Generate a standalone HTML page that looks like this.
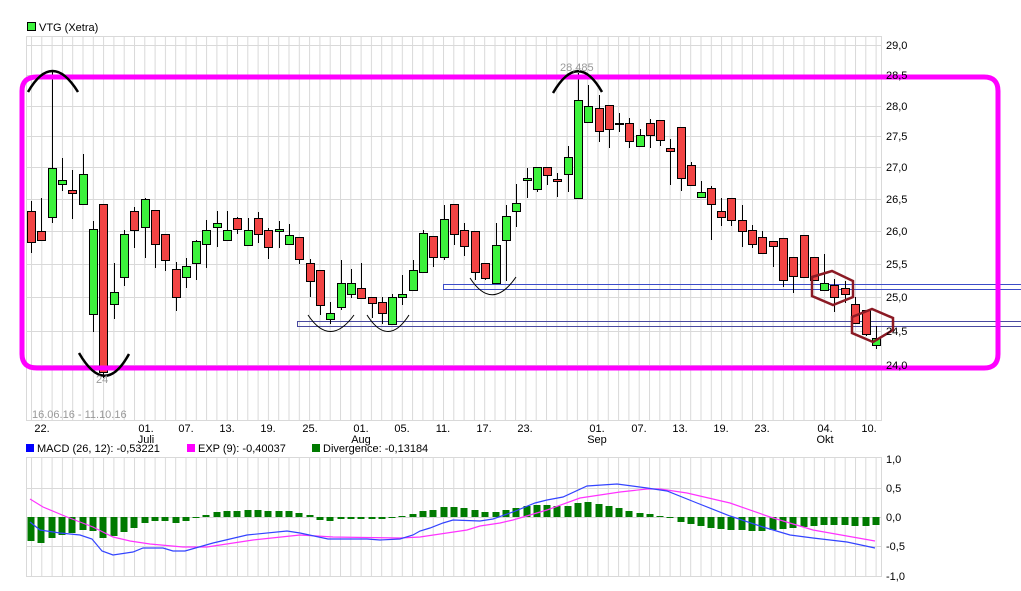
<!DOCTYPE html>
<html><head><meta charset="utf-8"><style>
html,body{margin:0;padding:0;background:#fff;width:1021px;height:591px;overflow:hidden}
svg{display:block}
text{font-family:"Liberation Sans",sans-serif;font-size:11px;fill:#000}
</style></head><body>
<svg width="1021" height="591" viewBox="0 0 1021 591" xmlns="http://www.w3.org/2000/svg">
<defs>
<pattern id="vg" x="31" y="0" width="10.3" height="10" patternUnits="userSpaceOnUse"><rect x="0" y="0" width="1" height="10" fill="#d9d9d9"/></pattern>
</defs>
<rect x="26" y="36" width="856" height="385" fill="url(#vg)"/>
<g stroke="#d9d9d9" stroke-width="1" fill="none">
<path d="M26 36.5H882M26 45.5H882M26 75.5H882M26 106.5H882M26 136.5H882M26 167.5H882M26 199.5H882M26 231.5H882M26 264.5H882M26 297.5H882M26 331.5H882M26 365.5H882M26 420.5H882M26.5 36V421M881.5 36V421"/>
</g>
<rect x="26" y="457" width="856" height="120" fill="url(#vg)"/>
<g stroke="#d9d9d9" stroke-width="1" fill="none">
<path d="M26 457.5H882M26 488.5H882M26 517.5H882M26 546.5H882M26 576.5H882M26.5 457V577M881.5 457V577"/>
</g>

<rect x="27.5" y="22.5" width="8" height="8" fill="#3cf23c" stroke="#000"/>
<text x="39" y="31">VTG (Xetra)</text>

<rect x="443.5" y="284.5" width="590" height="5" fill="none" stroke="#3c4cc8"/>
<rect x="297.5" y="321.5" width="730" height="5" fill="none" stroke="#4a4aa0"/>

<g stroke="#000" stroke-width="1">
<path d="M31.5 201V253M41.5 198V241M52.5 72V223M62.5 158V191M72.5 170V219M83.5 154V204M93.5 221V332M103.5 204V378M114.5 263V319M124.5 230V286M134.5 207V248M145.5 198V258M155.5 210V268M165.5 234V271M176.5 262V311M186.5 258V288M196.5 240V280M206.5 220V268M217.5 211V247M227.5 211V240M237.5 217V234M248.5 218V245M258.5 212V243M268.5 228V259M279.5 221V248M289.5 224V245M299.5 237V264M310.5 259V297M320.5 270V315M330.5 302V324M341.5 260V310M351.5 269V298M361.5 263V298M372.5 297V318M382.5 297V324M392.5 294V324M402.5 275V305M413.5 260V291M423.5 230V272M433.5 236V267M444.5 205V260M454.5 204V245M464.5 223V256M475.5 231V280M485.5 263V280M496.5 223V283M506.5 205V281M516.5 184V227M527.5 168V198M537.5 167V192M547.5 167V185M557.5 173V197M568.5 146V192M578.5 73V198M588.5 85V122M599.5 95V142M609.5 105V148M619.5 113V132M629.5 118V148M640.5 129V146M650.5 119V148M660.5 120V146M670.5 139V185M681.5 127V191M691.5 162V185M701.5 181V197M711.5 186V240M721.5 198V226M731.5 198V226M742.5 205V247M752.5 225V248M762.5 231V253M773.5 241V267M783.5 238V287M793.5 257V293M804.5 235V277M814.5 257V281M824.5 254V290M834.5 279V312M845.5 281V303M855.5 297V323M866.5 310V336M876.5 326V349"/>
</g>
<g stroke="#000" stroke-width="1" fill="#f24444">
<rect x="27.5" y="211.5" width="8" height="31"/>
<rect x="37.5" y="231.5" width="8" height="9"/>
<rect x="68.5" y="190.5" width="8" height="3"/>
<rect x="99.5" y="204.5" width="8" height="168"/>
<rect x="130.5" y="211.5" width="8" height="19"/>
<rect x="151.5" y="210.5" width="8" height="34"/>
<rect x="161.5" y="234.5" width="8" height="26"/>
<rect x="172.5" y="269.5" width="8" height="28"/>
<rect x="233.5" y="218.5" width="8" height="11"/>
<rect x="254.5" y="218.5" width="8" height="16"/>
<rect x="264.5" y="230.5" width="8" height="17"/>
<rect x="295.5" y="237.5" width="8" height="22"/>
<rect x="306.5" y="263.5" width="8" height="18"/>
<rect x="316.5" y="270.5" width="8" height="35"/>
<rect x="357.5" y="288.5" width="8" height="10"/>
<rect x="368.5" y="297.5" width="8" height="6"/>
<rect x="378.5" y="302.5" width="8" height="11"/>
<rect x="429.5" y="236.5" width="8" height="21"/>
<rect x="450.5" y="204.5" width="8" height="30"/>
<rect x="460.5" y="230.5" width="8" height="16"/>
<rect x="471.5" y="231.5" width="8" height="41"/>
<rect x="481.5" y="263.5" width="8" height="15"/>
<rect x="543.5" y="167.5" width="8" height="8"/>
<rect x="553.5" y="179.5" width="8" height="2"/>
<rect x="595.5" y="108.5" width="8" height="23"/>
<rect x="605.5" y="105.5" width="8" height="24"/>
<rect x="615.5" y="123.5" width="8" height="1"/>
<rect x="625.5" y="123.5" width="8" height="18"/>
<rect x="646.5" y="123.5" width="8" height="12"/>
<rect x="656.5" y="120.5" width="8" height="20"/>
<rect x="666.5" y="148.5" width="8" height="3"/>
<rect x="677.5" y="127.5" width="8" height="51"/>
<rect x="687.5" y="165.5" width="8" height="20"/>
<rect x="707.5" y="188.5" width="8" height="16"/>
<rect x="717.5" y="211.5" width="8" height="6"/>
<rect x="727.5" y="198.5" width="8" height="22"/>
<rect x="738.5" y="220.5" width="8" height="11"/>
<rect x="748.5" y="230.5" width="8" height="14"/>
<rect x="758.5" y="237.5" width="8" height="16"/>
<rect x="769.5" y="241.5" width="8" height="5"/>
<rect x="779.5" y="238.5" width="8" height="42"/>
<rect x="789.5" y="257.5" width="8" height="19"/>
<rect x="800.5" y="235.5" width="8" height="42"/>
<rect x="810.5" y="257.5" width="8" height="23"/>
<rect x="830.5" y="285.5" width="8" height="12"/>
<rect x="841.5" y="288.5" width="8" height="6"/>
<rect x="851.5" y="304.5" width="8" height="19"/>
<rect x="862.5" y="310.5" width="8" height="24"/>
</g>
<g stroke="#000" stroke-width="1" fill="#3cf23c">
<rect x="48.5" y="168.5" width="8" height="49"/>
<rect x="58.5" y="180.5" width="8" height="4"/>
<rect x="79.5" y="174.5" width="8" height="30"/>
<rect x="89.5" y="229.5" width="8" height="85"/>
<rect x="110.5" y="292.5" width="8" height="12"/>
<rect x="120.5" y="234.5" width="8" height="43"/>
<rect x="141.5" y="199.5" width="8" height="28"/>
<rect x="182.5" y="266.5" width="8" height="11"/>
<rect x="192.5" y="241.5" width="8" height="22"/>
<rect x="202.5" y="230.5" width="8" height="14"/>
<rect x="213.5" y="223.5" width="8" height="4"/>
<rect x="223.5" y="230.5" width="8" height="10"/>
<rect x="244.5" y="230.5" width="8" height="15"/>
<rect x="275.5" y="229.5" width="8" height="2"/>
<rect x="285.5" y="235.5" width="8" height="9"/>
<rect x="326.5" y="313.5" width="8" height="6"/>
<rect x="337.5" y="283.5" width="8" height="24"/>
<rect x="347.5" y="283.5" width="8" height="11"/>
<rect x="388.5" y="297.5" width="8" height="27"/>
<rect x="398.5" y="294.5" width="8" height="3"/>
<rect x="409.5" y="270.5" width="8" height="20"/>
<rect x="419.5" y="233.5" width="8" height="39"/>
<rect x="440.5" y="219.5" width="8" height="38"/>
<rect x="492.5" y="245.5" width="8" height="38"/>
<rect x="502.5" y="216.5" width="8" height="24"/>
<rect x="512.5" y="203.5" width="8" height="8"/>
<rect x="523.5" y="178.5" width="8" height="2"/>
<rect x="533.5" y="167.5" width="8" height="22"/>
<rect x="564.5" y="157.5" width="8" height="17"/>
<rect x="574.5" y="100.5" width="8" height="98"/>
<rect x="584.5" y="106.5" width="8" height="16"/>
<rect x="636.5" y="135.5" width="8" height="11"/>
<rect x="697.5" y="192.5" width="8" height="5"/>
<rect x="820.5" y="283.5" width="8" height="7"/>
<rect x="872.5" y="338.5" width="8" height="7"/>
</g>

<g fill="none" stroke="#8b1a24" stroke-width="2.5">
<path d="M812 277L832 271L853 281L853 297L833 305L812 296Z"/>
<path d="M852 317L872 309L893 318L893 330L873 342L852 333Z"/>
</g>

<g fill="none" stroke="#000" stroke-width="1">
<path d="M308 315Q330 348 354 315"/>
<path d="M367 315Q388 348 409 315"/>
<path d="M470 278Q492 312 516 277"/>
</g>

<path d="M37 77H984Q998 77 998 91V354Q998 368 984 368H37Q22 368 22 354V91Q22 77 37 77Z" fill="none" stroke="#ff00ff" stroke-width="5"/>

<g fill="none" stroke="#000" stroke-width="2.5">
<path d="M28 92Q52 50 78 92"/>
<path d="M79 353Q105 398 129 354"/>
<path d="M553 93Q578 50 602 92"/>
</g>

<text x="560" y="71" style="fill:#999">28,485</text>
<text x="96" y="383" style="fill:#999">24</text>
<text x="32" y="418" style="fill:#999">16.06.16 - 11.10.16</text>

<text x="886" y="49">29,0</text>
<text x="886" y="79">28,5</text>
<text x="886" y="110">28,0</text>
<text x="886" y="140">27,5</text>
<text x="886" y="171">27,0</text>
<text x="886" y="203">26,5</text>
<text x="886" y="235">26,0</text>
<text x="886" y="268">25,5</text>
<text x="886" y="301">25,0</text>
<text x="886" y="335">24,5</text>
<text x="886" y="369">24,0</text>

<g text-anchor="middle">
<text x="42" y="432">22.</text>
<text x="146" y="432">01.</text><text x="146" y="443">Juli</text>
<text x="186" y="432">07.</text>
<text x="227" y="432">13.</text>
<text x="268" y="432">19.</text>
<text x="310" y="432">25.</text>
<text x="361" y="432">01.</text><text x="361" y="443">Aug</text>
<text x="402" y="432">05.</text>
<text x="443" y="432">11.</text>
<text x="484" y="432">17.</text>
<text x="525" y="432">23.</text>
<text x="597" y="432">01.</text><text x="597" y="443">Sep</text>
<text x="639" y="432">07.</text>
<text x="680" y="432">13.</text>
<text x="721" y="432">19.</text>
<text x="762" y="432">23.</text>
<text x="825" y="432">04.</text><text x="825" y="443">Okt</text>
<text x="869" y="432">10.</text>
</g>

<rect x="26" y="444" width="8" height="8" fill="#0000ff"/>
<text x="37" y="452">MACD (26, 12): -0,53221</text>
<rect x="187" y="444" width="8" height="8" fill="#ff00ff"/>
<text x="198" y="452">EXP (9): -0,40037</text>
<rect x="312" y="444" width="8" height="8" fill="#007a00"/>
<text x="323" y="452">Divergence: -0,13184</text>

<text x="886" y="463">1,0</text>
<text x="886" y="492">0,5</text>
<text x="886" y="521">0,0</text>
<text x="886" y="550">-0,5</text>
<text x="886" y="580">-1,0</text>

<g fill="#007a00">
<rect x="27.5" y="517" width="7" height="24"/><rect x="37.5" y="517" width="7" height="26"/><rect x="48.5" y="517" width="7" height="21"/><rect x="58.5" y="517" width="7" height="18"/><rect x="68.5" y="517" width="7" height="16"/><rect x="79.5" y="517" width="7" height="13"/><rect x="89.5" y="517" width="7" height="14"/><rect x="99.5" y="517" width="7" height="21"/><rect x="110.5" y="517" width="7" height="19"/><rect x="120.5" y="517" width="7" height="15"/><rect x="130.5" y="517" width="7" height="11"/><rect x="141.5" y="517" width="7" height="6"/><rect x="151.5" y="517" width="7" height="4"/><rect x="161.5" y="517" width="7" height="4"/><rect x="172.5" y="517" width="7" height="6"/><rect x="182.5" y="517" width="7" height="4"/><rect x="192.5" y="517" width="7" height="1"/>
<rect x="202.5" y="515" width="7" height="2"/><rect x="213.5" y="512" width="7" height="5"/><rect x="223.5" y="511" width="7" height="6"/><rect x="233.5" y="511" width="7" height="6"/><rect x="244.5" y="510" width="7" height="7"/><rect x="254.5" y="510" width="7" height="7"/><rect x="264.5" y="511" width="7" height="6"/><rect x="275.5" y="511" width="7" height="6"/><rect x="285.5" y="511" width="7" height="6"/><rect x="295.5" y="513" width="7" height="4"/><rect x="306.5" y="515" width="7" height="2"/>
<rect x="316.5" y="517" width="7" height="3"/><rect x="326.5" y="517" width="7" height="4"/><rect x="337.5" y="517" width="7" height="2"/><rect x="347.5" y="517" width="7" height="2"/><rect x="357.5" y="517" width="7" height="2"/><rect x="368.5" y="517" width="7" height="2"/><rect x="378.5" y="517" width="7" height="2"/><rect x="388.5" y="517" width="7" height="1"/>
<rect x="398.5" y="516" width="7" height="1"/><rect x="409.5" y="514" width="7" height="3"/><rect x="419.5" y="511" width="7" height="6"/><rect x="429.5" y="510" width="7" height="7"/><rect x="440.5" y="507" width="7" height="10"/><rect x="450.5" y="507" width="7" height="10"/><rect x="460.5" y="508" width="7" height="9"/><rect x="471.5" y="510" width="7" height="7"/><rect x="481.5" y="512" width="7" height="5"/><rect x="492.5" y="512" width="7" height="5"/><rect x="502.5" y="510" width="7" height="7"/><rect x="512.5" y="508" width="7" height="9"/><rect x="523.5" y="506" width="7" height="11"/><rect x="533.5" y="505" width="7" height="12"/><rect x="543.5" y="505" width="7" height="12"/><rect x="553.5" y="506" width="7" height="11"/><rect x="564.5" y="506" width="7" height="11"/><rect x="574.5" y="503" width="7" height="14"/><rect x="584.5" y="502" width="7" height="15"/><rect x="595.5" y="504" width="7" height="13"/><rect x="605.5" y="506" width="7" height="11"/><rect x="615.5" y="508" width="7" height="9"/><rect x="625.5" y="511" width="7" height="6"/><rect x="636.5" y="513" width="7" height="4"/><rect x="646.5" y="514" width="7" height="3"/><rect x="656.5" y="516" width="7" height="1"/>
<rect x="666.5" y="517" width="7" height="1"/><rect x="677.5" y="517" width="7" height="5"/><rect x="687.5" y="517" width="7" height="7"/><rect x="697.5" y="517" width="7" height="9"/><rect x="707.5" y="517" width="7" height="11"/><rect x="717.5" y="517" width="7" height="12"/><rect x="727.5" y="517" width="7" height="13"/><rect x="738.5" y="517" width="7" height="13"/><rect x="748.5" y="517" width="7" height="14"/><rect x="758.5" y="517" width="7" height="14"/><rect x="769.5" y="517" width="7" height="13"/><rect x="779.5" y="517" width="7" height="12"/><rect x="789.5" y="517" width="7" height="11"/><rect x="800.5" y="517" width="7" height="10"/><rect x="810.5" y="517" width="7" height="9"/><rect x="820.5" y="517" width="7" height="8"/><rect x="830.5" y="517" width="7" height="8"/><rect x="841.5" y="517" width="7" height="8"/><rect x="851.5" y="517" width="7" height="9"/><rect x="862.5" y="517" width="7" height="9"/><rect x="872.5" y="517" width="7" height="8"/>
</g>

<polyline fill="none" stroke="#ff33ff" stroke-width="1.2" points="30,499 43,507 67,517 93,527 113,537 130,541 150,544 183,547 207,547 253,540 300,535 333,537 400,538 420,537 467,530 480,526 500,523 513,520 547,510 580,498 620,492 647,489 660,489 687,493 730,503 770,517 813,530 875,541"/>
<polyline fill="none" stroke="#3344ff" stroke-width="1.2" points="30,522 40,530 60,533 80,535 92,539 102,551 113,555 133,552 143,548 163,548 173,551 185,551 213,543 247,535 287,531 300,533 328,539 367,539 380,540 400,539 413,535 420,531 430,528 443,523 453,520 480,521 493,519 513,512 535,503 547,500 563,497 587,486 617,484 647,488 667,491 697,503 730,516 763,527 790,535 813,538 847,542 875,548"/>
</svg>
</body></html>
